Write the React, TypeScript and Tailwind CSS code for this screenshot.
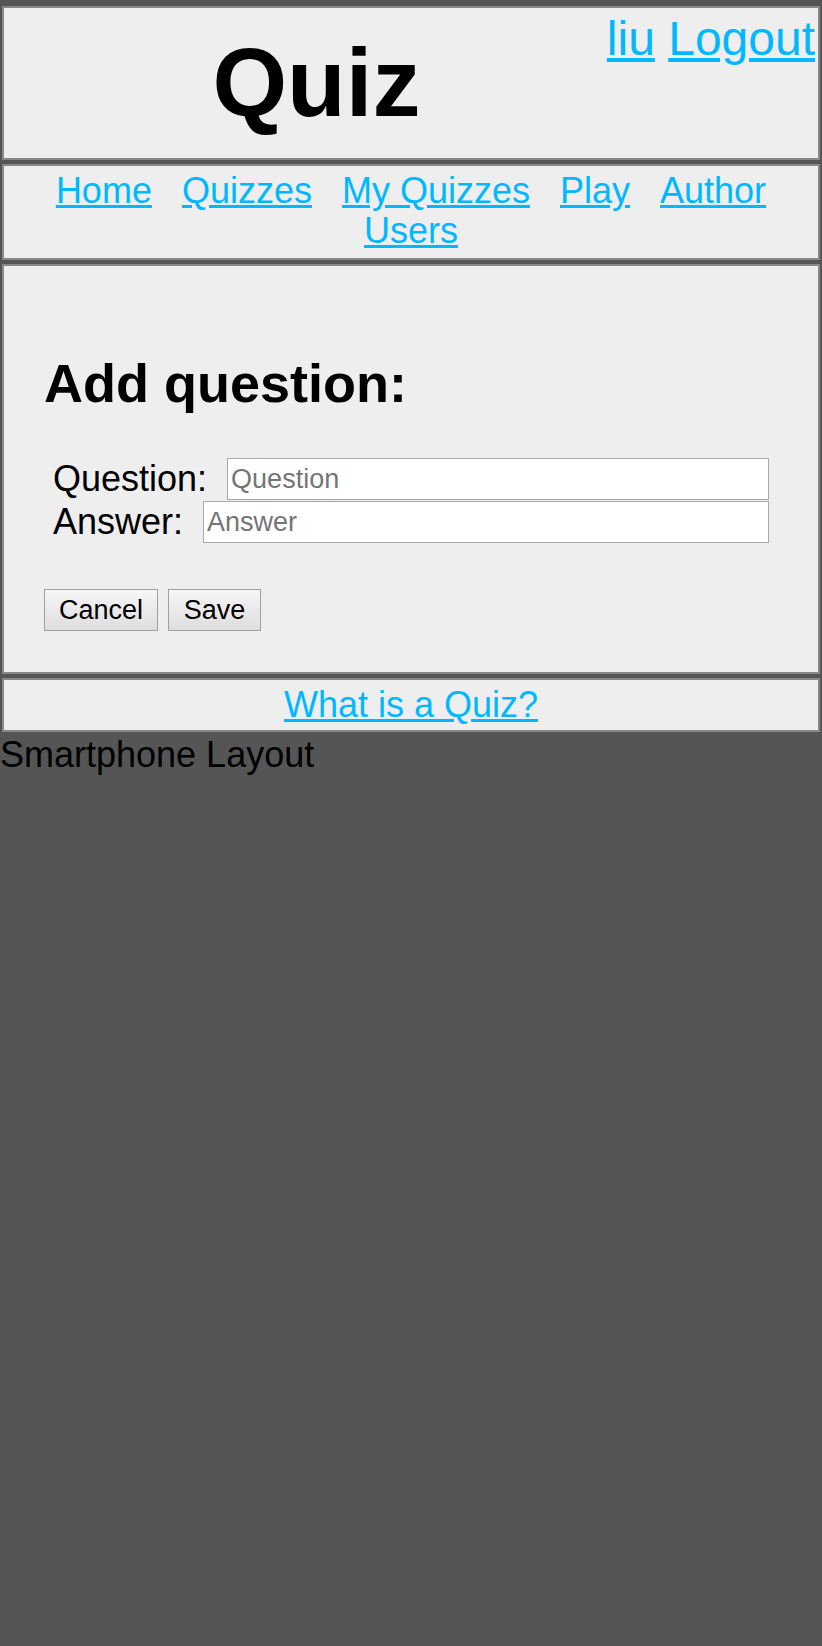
import React from 'react';

// Links shown in the main navigation bar
const NAV_LINKS = ['Home', 'Quizzes', 'My Quizzes', 'Play', 'Author', 'Users'];

const linkClass = 'text-[#00b8ff] underline';

const App: React.FC = () => {
  return (
    <div className="min-h-screen bg-[#555555] font-['Liberation_Sans',Arial,sans-serif] text-[36px] leading-[normal] text-black">
      <div className="flex flex-col gap-1 px-[2px] pt-[6px]">
        {/* Header */}
        <header className="flex h-[154px] border-2 border-[#888888] bg-[#eeeeee]">
          <h1 className="flex-1 self-center pl-[22px] text-center text-[96px] font-bold leading-[normal]">
            Quiz
          </h1>
          <div className="pt-[3px] pr-[3px] text-[48px] leading-[normal]">
            <a href="#" className={linkClass}>liu</a>{' '}
            <a href="#" className={linkClass}>Logout</a>
          </div>
        </header>

        {/* Navigation */}
        <nav className="flex flex-wrap justify-center gap-x-[30px] border-2 border-[#888888] bg-[#eeeeee] pt-[5px] pb-[7px] leading-[40px]">
          {NAV_LINKS.map((label) => (
            <a key={label} href="#" className={linkClass}>
              {label}
            </a>
          ))}
        </nav>

        {/* Add question form */}
        <main className="border-2 border-[#888888] bg-[#eeeeee] px-[40px] pt-[86px] pb-[41px]">
          <h2 className="text-[54px] font-bold leading-[normal]">Add question:</h2>
          <form className="mx-[9px] mt-[44px] flex flex-col gap-px">
            <div className="flex h-[42px] items-center gap-[20px]">
              <label className="leading-[normal]">Question:</label>
              <input
                type="text"
                placeholder="Question"
                className="h-[42px] min-w-0 flex-1 border border-[#a9a9a9] bg-white px-[3px] text-[27px] placeholder:text-[#757575] outline-none"
              />
            </div>
            <div className="flex h-[42px] items-center gap-[20px]">
              <label className="leading-[normal]">Answer:</label>
              <input
                type="text"
                placeholder="Answer"
                className="h-[42px] min-w-0 flex-1 border border-[#a9a9a9] bg-white px-[3px] text-[27px] placeholder:text-[#757575] outline-none"
              />
            </div>
          </form>
          <div className="mt-[46px] flex gap-[10px]">
            <button className="h-[42px] w-[114px] border border-[#a0a0a0] bg-linear-to-b from-[#f7f7f7] to-[#dddddd] text-[27px] leading-none">
              Cancel
            </button>
            <button className="h-[42px] w-[93px] border border-[#a0a0a0] bg-linear-to-b from-[#f7f7f7] to-[#dddddd] text-[27px] leading-none">
              Save
            </button>
          </div>
        </main>

        {/* Footer */}
        <footer className="border-2 border-[#888888] bg-[#eeeeee] py-[4px] text-center leading-[42px]">
          <a href="#" className={linkClass}>What is a Quiz?</a>
        </footer>
      </div>
      <div className="pt-[2px] leading-[normal]">Smartphone Layout</div>
    </div>
  );
};

export default App;
